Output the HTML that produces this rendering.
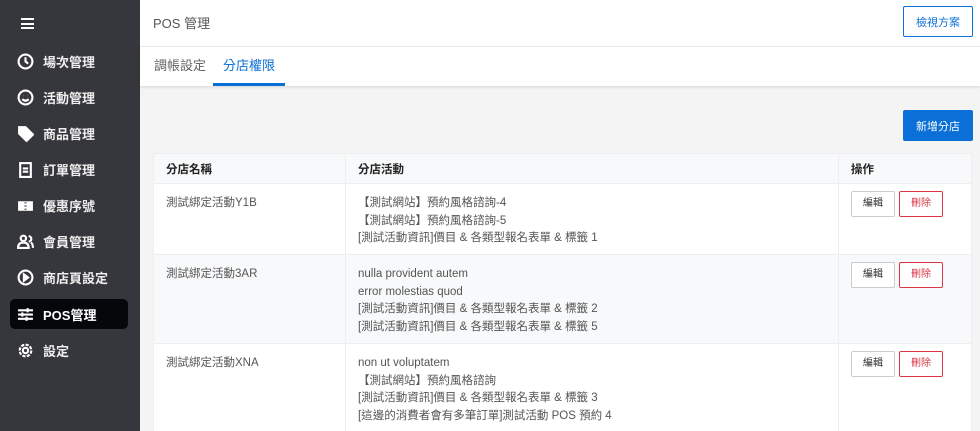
<!DOCTYPE html>
<html style="overflow:hidden;height:431px"><head><meta charset="utf-8"><style>
*{box-sizing:border-box;margin:0;padding:0}
body{width:980px;height:431px;overflow:hidden;font-family:"Liberation Sans","Noto Sans CJK TC",sans-serif;font-size:12px;color:#333;background:#f4f4f5;position:relative}
.sb{position:absolute;left:0;top:0;width:140px;height:431px;background:#36373c;color:#fff}
.it{position:absolute;left:10px;width:118px;height:30px;display:flex;align-items:center;padding-left:7px;font-size:13px;font-weight:bold;color:#eee}
.it svg{width:17px;height:17px;margin-right:9px;fill:none;stroke:#fff;stroke-width:2}
.act{background:#05070b;border-radius:5px;color:#fff}
.hd{position:absolute;left:140px;top:0;right:0;height:47px;background:#fff;border-bottom:1px solid #eee}
.tabs{position:absolute;left:140px;top:47px;right:0;height:39px;background:#fff;box-shadow:0 1px 3px rgba(0,0,0,.12)}
.tab{position:absolute;top:0;height:39px;line-height:37px;font-size:13px;color:#666}
.btn{position:absolute;border-radius:2px;font-size:11px;display:flex;align-items:center;justify-content:center}
table{position:absolute;left:153px;top:153px;width:819px;border-collapse:collapse;background:#fff}
td,th{border:1px solid #eee;vertical-align:top;text-align:left;padding:0 12px;font-size:11.5px}
th{height:30px;vertical-align:middle;font-weight:bold;background:#f8f9fa;color:#222}
td{color:#555;line-height:17.5px;padding-top:11px}
tr.g td{background:#f8f9fa}
.e,.d{display:inline-flex;align-items:center;justify-content:center;width:44px;height:26px;border:1px solid #ccc;border-radius:2px;font-size:10px;color:#333;background:#fff;margin-top:-4px}
.d{border-color:#dc3545;color:#dc3545;margin-left:4px}
</style></head><body>
<div class="sb">
<div style="position:absolute;left:21px;top:18px;width:13px;"><div style="height:2px;background:#fff;margin-bottom:2.5px"></div><div style="height:2px;background:#fff;margin-bottom:2.5px"></div><div style="height:2px;background:#fff"></div></div>
<div class="it" style="top:46px"><svg viewBox="0 0 16 16"><circle cx="8" cy="8" r="6.5"/><path d="M8 4v4l2.5 2"/></svg>場次管理</div>
<div class="it" style="top:82px"><svg viewBox="0 0 16 16"><circle cx="8" cy="8" r="6.5"/><path d="M5 9.5q3 3 6 0M6 6h.1M10 6h.1"/></svg>活動管理</div>
<div class="it" style="top:118px"><svg viewBox="0 0 16 16"><path d="M2 2h6l7 7-6 6-7-7z" fill="#fff"/></svg>商品管理</div>
<div class="it" style="top:154px"><svg viewBox="0 0 16 16"><rect x="3" y="2" width="10" height="13"/><path d="M5.5 7h5M5.5 10h5"/></svg>訂單管理</div>
<div class="it" style="top:190px"><svg viewBox="0 0 16 16"><rect x="1" y="4" width="14" height="9" fill="#fff" stroke="none"/><path d="M8 5v1M8 8v1M8 11v1" stroke="#36373c"/></svg>優惠序號</div>
<div class="it" style="top:226px"><svg viewBox="0 0 16 16"><circle cx="6" cy="5" r="2.5"/><path d="M1 14q0-5 5-5t5 5zM11 3a2.5 2.5 0 010 5M13 9q2 1 2 5"/></svg>會員管理</div>
<div class="it" style="top:262px"><svg viewBox="0 0 16 16"><circle cx="8" cy="8" r="6.5"/><path d="M6.5 5v6l4-3z" fill="#fff"/></svg>商店頁設定</div>
<div class="it act" style="top:299px"><svg viewBox="0 0 16 16"><path d="M1 4h14M1 8h14M1 12h14M10 2v4M5 6v4M9 10v4"/></svg>POS管理</div>
<div class="it" style="top:335px"><svg viewBox="0 0 16 16"><circle cx="8" cy="8" r="2.5"/><circle cx="8" cy="8" r="5.5" stroke-dasharray="3 1.3"/></svg>設定</div>
</div>
<div class="hd"><div style="position:absolute;left:13px;top:13px;font-size:13px;color:#555">POS 管理</div></div>
<div class="btn" style="left:903px;top:6px;width:70px;height:31px;border:1px solid #0a6fd6;color:#0a6fd6;background:#fff">檢視方案</div>
<div class="tabs">
<div class="tab" style="left:14px">調帳設定</div>
<div class="tab" style="left:73px;width:72px;text-align:center;color:#0a6fd6;border-bottom:3px solid #0a6fd6">分店權限</div>
</div>
<div class="btn" style="left:903px;top:110px;width:70px;height:31px;background:#0a6fd6;color:#fff">新增分店</div>
<table>
<tr><th style="width:192px">分店名稱</th><th style="width:493px">分店活動</th><th>操作</th></tr>
<tr style="height:71px"><td>測試綁定活動Y1B</td><td>【測試網站】預約風格諮詢-4<br>【測試網站】預約風格諮詢-5<br>[測試活動資訊]價目 &amp; 各類型報名表單 &amp; 標籤 1</td><td><span class="e">編輯</span><span class="d">刪除</span></td></tr>
<tr class="g" style="height:89px"><td>測試綁定活動3AR</td><td>nulla provident autem<br>error molestias quod<br>[測試活動資訊]價目 &amp; 各類型報名表單 &amp; 標籤 2<br>[測試活動資訊]價目 &amp; 各類型報名表單 &amp; 標籤 5</td><td><span class="e">編輯</span><span class="d">刪除</span></td></tr>
<tr style="height:88px"><td>測試綁定活動XNA</td><td>non ut voluptatem<br>【測試網站】預約風格諮詢<br>[測試活動資訊]價目 &amp; 各類型報名表單 &amp; 標籤 3<br>[這邊的消費者會有多筆訂單]測試活動 POS 預約 4</td><td><span class="e">編輯</span><span class="d">刪除</span></td></tr>
</table>
</body></html>
